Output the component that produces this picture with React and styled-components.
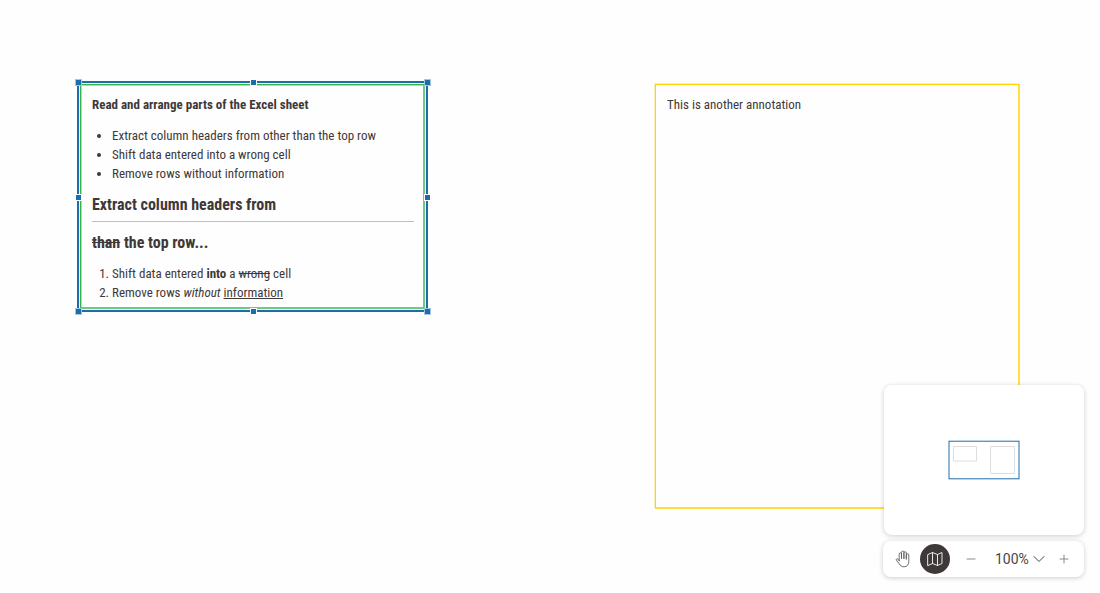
import React from "react";
import styled, { createGlobalStyle, css } from "styled-components";

const Global = createGlobalStyle`
  *, *::before, *::after { box-sizing: border-box; }
  body {
    margin: 0;
    background: #fefefe;
    color: #3e3938;
    font: 13px/19px "Roboto Condensed", Roboto, sans-serif;
  }
`;

const Canvas = styled.main`
  position: relative;
  min-height: 100vh;
  overflow: hidden;
`;

const Annotation = styled.article`
  position: absolute;
  left: ${(p) => p.$x}px;
  top: ${(p) => p.$y}px;
  width: ${(p) => p.$w}px;
  height: ${(p) => p.$h}px;
  padding: 10px 9px 0 11px;
  ${(p) =>
    p.$tone === "green"
      ? css`
          border: 1px solid #32b44a;
          border-right: 2px solid #6dcb7b;
          border-bottom: 2px solid #6dcb7b;
          box-shadow: inset 1px 1px #a8e0b0;
        `
      : css`
          border: 1px solid #ffd500;
          border-right: 2px solid #ffe040;
          border-bottom: 2px solid #ffe040;
          box-shadow: -1px -1px #fff2b0;
        `}

  p { margin: 0 0 12px; }
  ul, ol { margin: 0 0 12px; padding-left: 20px; }
  h2 {
    margin: 0 0 11px;
    font-size: 16px;
    line-height: 20px;
    font-weight: 700;
  }
  hr { margin: -5px 0 11px; border: 0; border-top: 1px solid #bfbfbf; }
`;

const Selection = styled.div`
  position: absolute;
  left: 77px;
  top: 81px;
  width: 351px;
  height: 231px;
  border: 2px solid #1c6dab;
  pointer-events: none;
`;

const HandleFrame = styled.div`
  position: absolute;
  inset: -1px;
`;

const Handle = styled.span`
  position: absolute;
  left: ${(p) => p.$left};
  top: ${(p) => p.$top};
  width: 7px;
  height: 7px;
  margin: -3px;
  background: #1c6dab;
  border: 1px solid ${(p) => (p.$corner ? "#a4c5de" : "#fefefe")};
`;

const Dock = styled.aside`
  position: absolute;
  right: 16px;
  bottom: 16px;
  width: 201px;
  display: flex;
  flex-direction: column;
  gap: 6px;
`;

const Panel = styled.div`
  background: #fff;
  border-radius: 8px;
  box-shadow: 0 1px 5px rgba(0, 0, 0, 0.2);
`;

const Minimap = styled(Panel)`
  height: 150px;
  margin-left: 1px;
  display: grid;
  place-items: center;
`;

const Toolbar = styled(Panel)`
  height: 36px;
  padding: 0 9px;
  display: flex;
  align-items: center;
`;

const ToolButton = styled.button`
  width: ${(p) => (p.$active ? 30 : 22)}px;
  height: 30px;
  padding: 0;
  border: 0;
  border-radius: 50%;
  display: grid;
  place-items: center;
  color: ${(p) => (p.$active ? "#e8e8e8" : p.$soft ? "#8c8988" : "#625e5d")};
  background: ${(p) => (p.$active ? "#3e3938" : "transparent")};
`;

const Tools = styled.div`
  display: flex;
  gap: 6px;
`;

const Zoom = styled.div`
  flex: 1;
  margin-left: 10px;
  display: flex;
  align-items: center;
`;

const ZoomLevel = styled.button`
  margin: 0 auto 0 13px;
  padding: 0;
  border: 0;
  background: none;
  display: flex;
  align-items: center;
  gap: 4px;
  color: #4a4644;
  font: 14px/20px Roboto, sans-serif;
`;

const Icon = ({ w = 16, h = 16, width = 1, children }) => (
  <svg width={w} height={h} viewBox={`0 0 ${w} ${h}`} fill="none" stroke="currentColor" strokeWidth={width} strokeLinecap="round" strokeLinejoin="round" aria-hidden="true">
    {children}
  </svg>
);

const handles = [
  ["0%", "0%"], ["50%", "0%"], ["100%", "0%"],
  ["0%", "50%"], ["100%", "50%"],
  ["0%", "100%"], ["50%", "100%"], ["100%", "100%"],
];

export default function App() {
  return (
    <>
      <Global />
      <Canvas>
        <Annotation $tone="green" $x={80} $y={84} $w={345} $h={225}>
          <p><strong>Read and arrange parts of the Excel sheet</strong></p>
          <ul>
            <li>Extract column headers from other than the top row</li>
            <li>Shift data entered into a wrong cell</li>
            <li>Remove rows without information</li>
          </ul>
          <h2>Extract column headers from</h2>
          <hr />
          <h2><s>than</s> the top row...</h2>
          <ol>
            <li>Shift data entered <strong>into</strong> a <s>wrong</s> cell</li>
            <li>Remove rows <em>without</em> <u>information</u></li>
          </ol>
        </Annotation>
        <Selection>
          <HandleFrame>
            {handles.map(([x, y]) => (
              <Handle key={x + y} $left={x} $top={y} $corner={x !== "50%" && y !== "50%"} />
            ))}
          </HandleFrame>
        </Selection>
        <Annotation $tone="yellow" $x={655} $y={84} $w={365} $h={425}>
          <p>This is another annotation</p>
        </Annotation>
        <Dock>
          <Minimap>
            <svg width="72" height="40" viewBox="0 0 72 40" fill="none" aria-label="Overview">
              <path d="M5.5 6.5h23v14.5h-23zM42.500 6.500h24v27h-24z" stroke="#dedede" />
              <rect x="1" y="1.200" width="70" height="37.600" stroke="#1c6dab" strokeWidth="1" />
            </svg>
          </Minimap>
          <Toolbar>
            <Tools>
              <ToolButton aria-label="Pan">
                <Icon w={16} h={18} width={0.9}>
                  <path d="M4.200 10.800V4a1.100 1.100 0 0 1 2.300 0V8.500M6.500 8.500V2.300a1.200 1.200 0 0 1 2.400 0V8.500M8.900 8.500V2.900a1.200 1.200 0 0 1 2.400 0V9M11.300 9V5a1.200 1.200 0 0 1 2.500 0V11.500c0 3.300-1.800 5.300-4.800 5.300-2.600 0-3.700-1.300-4.800-3L1.400 10.200c-.6-1.100.7-2 1.500-1.200L4.200 10.800" />
                </Icon>
              </ToolButton>
              <ToolButton aria-label="Minimap" $active>
                <Icon>
                  <path d="M1 3.500 5.500 1.500l5 2 4.500-2V12.500l-4.500 2-5-2-4.500 2zM5.500 1.500v11M10.500 3.500v11" />
                </Icon>
              </ToolButton>
            </Tools>
            <Zoom>
              <ToolButton aria-label="Zoom out" $soft><Icon><path d="M4 8h8" /></Icon></ToolButton>
              <ZoomLevel>
                100%
                <Icon w={12}><path d="M1 5.500l5 5L11 5.500" /></Icon>
              </ZoomLevel>
              <ToolButton aria-label="Zoom in" $soft><Icon><path d="M4 8h8M8 4v8" /></Icon></ToolButton>
            </Zoom>
          </Toolbar>
        </Dock>
      </Canvas>
    </>
  );
}
